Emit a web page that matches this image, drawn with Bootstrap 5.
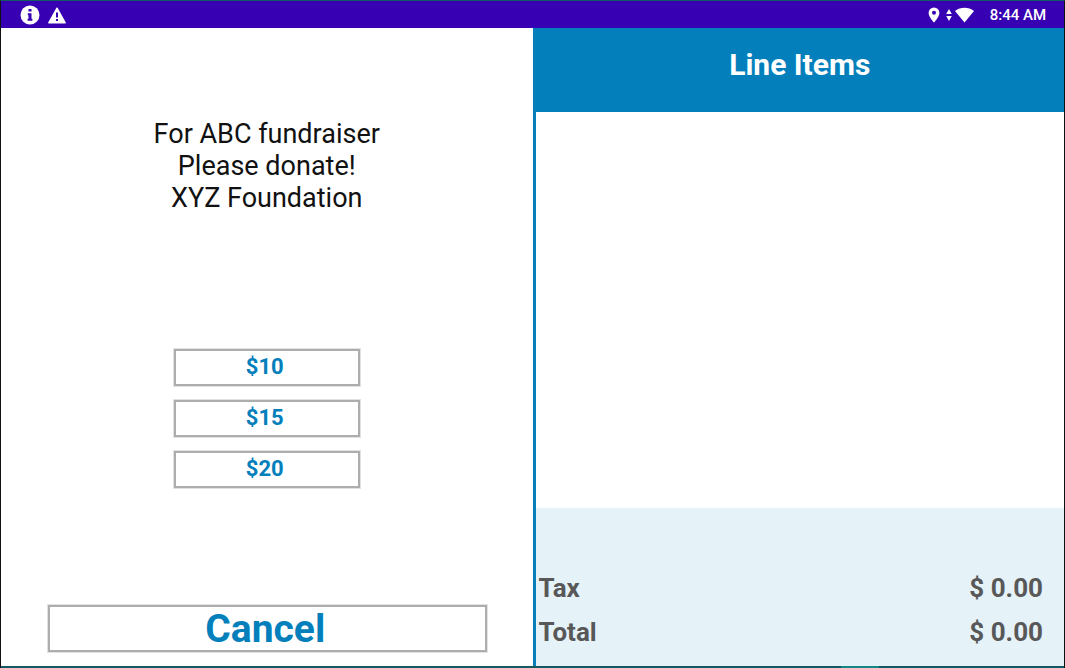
<!DOCTYPE html>
<html lang="en">
<head>
<meta charset="utf-8">
<meta name="viewport" content="width=device-width, initial-scale=1">
<title>Donation</title>
<link href="https://cdn.jsdelivr.net/npm/bootstrap@5.3.0/dist/css/bootstrap.min.css" rel="stylesheet">
<style>
  body { font-family: Roboto, sans-serif; color: #111; background: #fff; }
  .screen { border: 1px solid #111; border-top-color: #125a60; border-bottom: 0; }
  .status-bar { height: 27px; background: #3700b3; font-size: 15px; line-height: 26px; padding: 1px 18px 0 19px; font-weight: 500; }
  .message { font-size: 27px; line-height: 32px; padding-top: 90px; }
  .btn-outline { border: 2px solid #adadad; outline: 1px solid #e2e2e2; border-radius: 0; background: #fff; color: #0380bc; font-weight: 700; padding: 0 4px 0 0; }
  .btn-outline:hover { background: #e5f2f8; color: #0380bc; border-color: #adadad; }
  .amounts { width: 35%; gap: 14px; margin-top: 135px; }
  .amounts .btn-outline { font-size: 22px; line-height: 31px; padding-bottom: 2px; }
  .cancel-row { padding: 0 46px 14px 47px; }
  .cancel-row .btn-outline { font-size: 39px; line-height: 42px; padding-top: 1px; }
  .items-pane { border-left: 3px solid #0380bc; }
  .items-head { background: #0380bc; height: 84px; font-size: 30px; line-height: 36px; padding-top: 19px; font-weight: 700; }
  .totals { background: #e5f2f8; color: #585858; font-size: 26px; line-height: 44px; font-weight: 700; padding: 58px 21px 12px 3px; }
  .bottom-edge { height: 2px; background: #125a60; padding-left: 79%; }
  .bottom-edge-mark { width: 38px; background: #168787; }
</style>
</head>
<body>
<div class="screen d-flex flex-column min-vh-100">
  <header class="status-bar d-flex justify-content-between align-items-center text-white">
    <div class="d-flex align-items-center gap-2">
      <svg width="20" height="20" viewBox="0 0 20 20" role="img" aria-label="Information"><circle cx="10" cy="10" r="9.5" fill="#fff"/><path d="M8.500 4h3v2.600h-3zM7.800 8.200h3.700v5.600h.9V15.800H7.600v-2h.9v-3.600h-.7z" fill="#3700b3"/></svg>
      <svg width="18" height="17" viewBox="0 0 18 17" role="img" aria-label="Warning"><path d="M9 1.200 17.200 15.800H.8z" fill="#fff" stroke="#fff" stroke-width="1.400" stroke-linejoin="round"/><path d="M8 5.500h2v5H8zM8 12h2v2H8z" fill="#3700b3"/></svg>
    </div>
    <div class="d-flex align-items-center">
      <svg width="46" height="18" viewBox="0 0 46 18" class="me-3" role="img" aria-label="Location and Wi-Fi"><path fill="#fff" fill-rule="evenodd" d="M6 1.500a5.400 5.400 0 0 0-5.400 5.400C.6 10.800 6 16.500 6 16.500s5.400-5.700 5.400-9.600A5.400 5.400 0 0 0 6 1.500zm0 3.300a2 2 0 1 1 0 4 2 2 0 0 1 0-4z"/><path fill="#fff" d="M21 3 23.800 8h-5.600zM21 15l2.800-5h-5.600zM27 5C32.500.7 40.500.7 46 5L36.500 16.500z"/></svg>
      <time>8:44 AM</time>
    </div>
  </header>
  <main class="row g-0 flex-grow-1">
    <section class="col-6 d-flex flex-column align-items-center">
      <p class="message text-center mb-0">For ABC fundraiser<br>Please donate!<br>XYZ Foundation</p>
      <div class="amounts d-flex flex-column">
        <button type="button" class="btn btn-outline">$10</button>
        <button type="button" class="btn btn-outline">$15</button>
        <button type="button" class="btn btn-outline">$20</button>
      </div>
      <div class="cancel-row w-100 mt-auto">
        <button type="button" class="btn btn-outline w-100">Cancel</button>
      </div>
    </section>
    <section class="items-pane col-6 d-flex flex-column">
      <h1 class="items-head text-white text-center mb-0">Line Items</h1>
      <div class="flex-grow-1"></div>
      <dl class="totals mb-0">
        <div class="d-flex justify-content-between"><dt>Tax</dt><dd class="mb-0">$ 0.00</dd></div>
        <div class="d-flex justify-content-between"><dt>Total</dt><dd class="mb-0">$ 0.00</dd></div>
      </dl>
    </section>
  </main>
  <div class="bottom-edge d-flex"><div class="bottom-edge-mark"></div></div>
</div>
<script src="https://cdn.jsdelivr.net/npm/bootstrap@5.3.0/dist/js/bootstrap.bundle.min.js"></script>
</body>
</html>
